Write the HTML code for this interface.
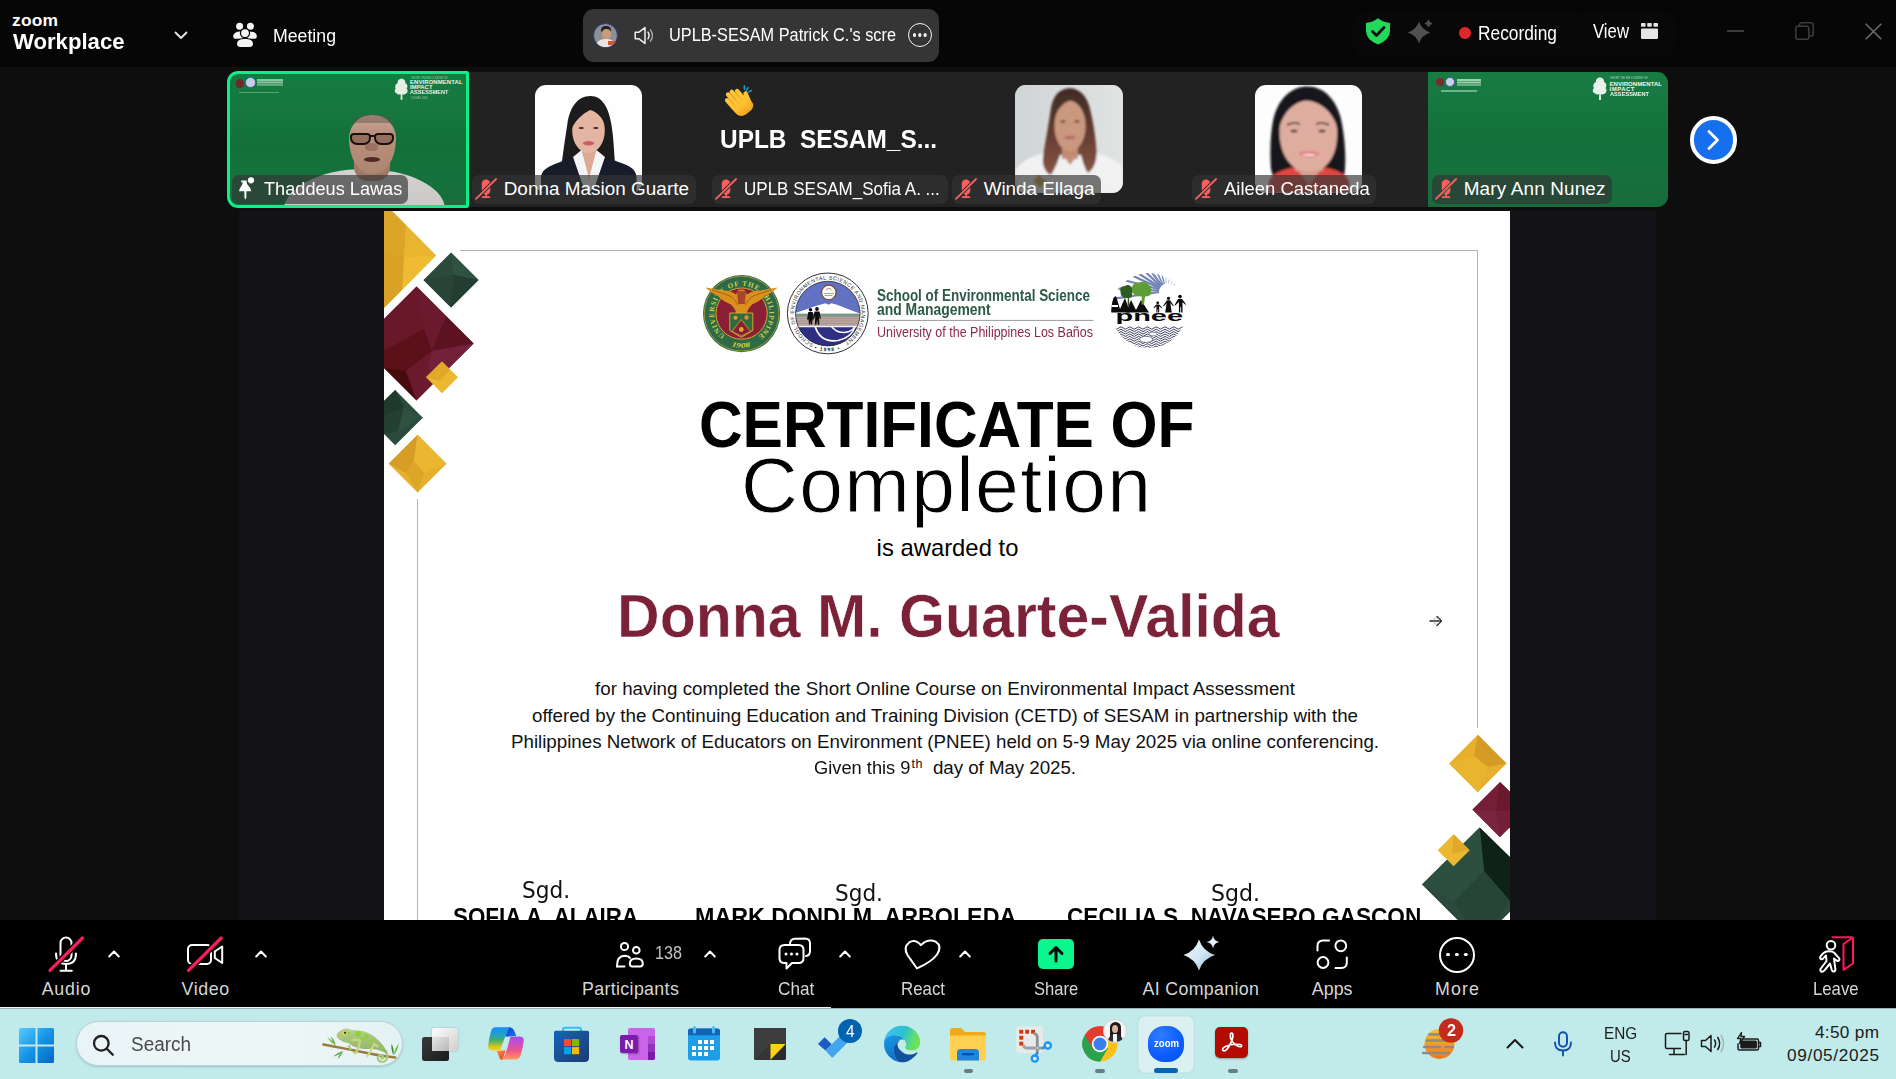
<!DOCTYPE html>
<html lang="en">
<head>
<meta charset="utf-8">
<title>Zoom Workplace - Meeting</title>
<style>
*{box-sizing:border-box;margin:0;padding:0}
html,body{width:1896px;height:1079px;overflow:hidden;background:#0e0e0e}
body{position:relative;font-family:"Liberation Sans",sans-serif;color:#fff}
.abs{position:absolute}
.t{position:absolute;white-space:pre;line-height:1;font-family:"Liberation Sans",sans-serif}
svg{position:absolute;overflow:visible}
#top{position:absolute;left:0;top:0;width:1896px;height:67px;background:#060606}
#gallery{position:absolute;left:0;top:67px;width:1896px;height:143px;background:#0e0e0e}
#stage{position:absolute;left:239px;top:211px;width:1417px;height:709px;background:#121217;overflow:hidden}
#cert{position:absolute;left:145px;top:0;width:1126px;height:760px;background:#fff;overflow:hidden;color:#000}
#toolbar{position:absolute;left:0;top:920px;width:1896px;height:88px;background:#000}
#taskbar{position:absolute;left:0;top:1007px;width:1896px;height:72px;background:#c1eaea}
</style>
</head>
<body>
<div id="top">
<span class="t" style="left:12.0px;top:11.6px;font-size:17.4px;letter-spacing:0.198px;font-weight:bold;color:#fff">zoom</span>
<span class="t" style="left:13.0px;top:30.2px;font-size:22.8px;transform:scaleX(0.9706);transform-origin:0 0;font-weight:bold;color:#fff">Workplace</span>
<svg style="left:173.500px;top:30.500px" width="14" height="9" viewBox="0 0 14 9"><path d="M1.5 1.5 L7 7 L12.5 1.5" fill="none" stroke="#e8e8e8" stroke-width="1.8" stroke-linecap="round" stroke-linejoin="round"/></svg>
<svg style="left:230px;top:20px" width="30" height="30" viewBox="230 20 30 30" fill="#f5f5f7"><circle cx="239.600" cy="26.300" r="3.500"/><circle cx="250.400" cy="26.300" r="3.500"/><path d="M233.200 36.500 C233.200 33 236.500 31.500 240.500 31.500 C241.300 31.500 242 31.600 243 31.900 L243 38 Q241 38.700 238 38.700 H235.300 Q233.200 38.700 233.200 36.500Z"/><path d="M256.800 36.500 C256.800 33 253.500 31.500 249.500 31.500 C248.700 31.500 248 31.600 247 31.900 L247 38 Q249 38.700 252 38.700 H254.700 Q256.800 38.700 256.800 36.500Z"/><circle cx="245" cy="33.100" r="5.200" fill="#060606"/><circle cx="245" cy="33.100" r="3.900"/><path d="M237 43.800 C237 40.200 240.500 38.900 245 38.900 C249.500 38.900 253 40.200 253 43.800 C253 46 251.500 47.100 249.500 47.100 H240.500 C238.500 47.100 237 46 237 43.800Z"/></svg>
<span class="t" style="left:273.0px;top:25.7px;font-size:19.2px;transform:scaleX(0.9229);transform-origin:0 0;color:#fff">Meeting</span>
<div class="abs" style="left:583px;top:9px;width:356px;height:53px;border-radius:11px;background:#353535"></div>
<div class="abs" style="left:593px;top:23px;width:25px;height:25px;border-radius:50%;background:#8d8f96;overflow:hidden;border:1px solid #2a3a7a">
  <div class="abs" style="left:7px;top:2px;width:10px;height:6px;border-radius:5px 5px 2px 2px;background:#222"></div>
  <div class="abs" style="left:7.5px;top:5px;width:9px;height:10px;border-radius:45%;background:#c99a7c"></div>
  <div class="abs" style="left:1px;top:15px;width:22px;height:10px;border-radius:9px 9px 0 0;background:#e9e4df"></div>
  <div class="abs" style="left:14px;top:17px;width:8px;height:4px;background:#d2552a"></div>
</div>
<svg style="left:634px;top:26px" width="21" height="19" viewBox="0 0 21 19" fill="none" stroke="#f0f0f0" stroke-width="1.5" stroke-linejoin="round" stroke-linecap="round"><path d="M1.200 6.200 h3.800 l6-4.600 v15.800 l-6-4.600 h-3.800z"/><path d="M14 6.200 q2.200 3.300 0 6.600"/><path d="M16.400 3.800 q4 5.700 0 11.400" stroke="#bbb" stroke-width="1.200"/></svg>
<span class="t" style="left:669.0px;top:25.8px;font-size:18.9px;transform:scaleX(0.8635);transform-origin:0 0;color:#fff">UPLB-SESAM Patrick C.'s scre</span>
<div class="abs" style="left:908px;top:23px;width:24px;height:24px;border-radius:50%;border:1.900px solid #f4f4f4"></div>
<div class="abs" style="left:913px;top:33.300px;width:3.400px;height:3.400px;border-radius:50%;background:#f4f4f4;box-shadow:5.300px 0 0 #f4f4f4,10.600px 0 0 #f4f4f4"></div>
<!-- right cluster -->
<div class="abs" style="left:1353px;top:12px;width:252px;height:43px;border-radius:10px;background:#080808"></div>
<div class="abs" style="left:1573px;top:12px;width:103px;height:43px;border-radius:10px;background:#080808"></div>
<svg style="left:1365px;top:17.500px" width="26" height="27" viewBox="0 0 26 27"><path d="M13 0.300 Q18 4.300 24.300 4.800 Q25 4.900 25 5.600 V13 Q25 21.500 13 26.500 Q1 21.500 1 13 V5.600 Q1 4.900 1.700 4.800 Q8 4.300 13 0.300Z" fill="#23d95b"/><path d="M7.500 13.500 L11.500 17.500 L19 9.500" fill="none" stroke="#0a0a0a" stroke-width="2.800" stroke-linecap="round" stroke-linejoin="round"/></svg>
<svg style="left:1408px;top:19px" width="26" height="25" viewBox="0 0 26 25" fill="#505050"><path d="M11 2.500 Q13.600 10.800 22.300 13.500 Q13.600 16.200 11 24.500 Q8.400 16.200 -0.300 13.500 Q8.400 10.800 11 2.500Z"/><path d="M20.500 0.200 Q21.500 3.500 24.500 4.500 Q21.500 5.500 20.500 8.800 Q19.500 5.500 16.500 4.500 Q19.500 3.500 20.500 0.200Z"/></svg>
<div class="abs" style="left:1459px;top:27px;width:12px;height:12px;border-radius:50%;background:#e02828"></div>
<span class="t" style="left:1477.6px;top:23.7px;font-size:19.6px;transform:scaleX(0.8834);transform-origin:0 0;color:#fff">Recording</span>
<span class="t" style="left:1593.0px;top:21.6px;font-size:19.4px;transform:scaleX(0.8636);transform-origin:0 0;color:#fff">View</span>
<svg style="left:1641px;top:23px" width="17" height="16" viewBox="0 0 17 16" fill="#e6e6e6"><rect x="0" y="0" width="4.600" height="3.800" rx="0.800"/><rect x="6.200" y="0" width="4.600" height="3.800" rx="0.800"/><rect x="12.400" y="0" width="4.600" height="3.800" rx="0.800"/><rect x="0" y="5.400" width="17" height="10.600" rx="1.200"/></svg>
<div class="abs" style="left:1727px;top:30px;width:17px;height:1.5px;background:#3d3d3d"></div>
<svg style="left:1795px;top:22px" width="19" height="18" viewBox="0 0 19 18" fill="none" stroke="#3d3d3d" stroke-width="1.500"><rect x="0.800" y="4.200" width="13" height="13" rx="2"/><path d="M4.500 4 V3 Q4.500 0.800 6.700 0.800 H16 Q18.200 0.800 18.200 3 V12 Q18.200 14 16.200 14 H14"/></svg>
<svg style="left:1865px;top:23px" width="17" height="17" viewBox="0 0 17 17" fill="none" stroke="#6e6e6e" stroke-width="1.500"><path d="M0.700 0.700 L16.300 16.300 M16.300 0.700 L0.700 16.300"/></svg>
</div>
<div id="gallery">
<!-- strip background (tiles 2-5) -->
<div class="abs" style="left:469px;top:5px;width:960px;height:135px;background:#222"></div>
<!-- tile 1: active speaker -->
<div class="abs" style="left:227px;top:3.700px;width:242.300px;height:137.500px;border-radius:11px 2px 2px 11px;background:linear-gradient(180deg,#167b41 0,#15753c 55%,#166e3c 100%);overflow:hidden">
  <div class="abs" style="left:0;top:44px;width:243px;height:60px;background:linear-gradient(180deg,rgba(16,108,54,0) 0,rgba(16,108,54,.6) 50%,rgba(16,108,54,0) 100%)"></div>
  <!-- tiny header logos -->
  <div class="abs" style="left:8.500px;top:8.500px;width:8.500px;height:8.500px;border-radius:50%;background:#6d2a2a"></div>
  <div class="abs" style="left:18px;top:6.500px;width:10.500px;height:10.500px;border-radius:50%;background:#c5cfe8;border:1.500px solid #44599c"></div>
  <div class="abs" style="left:30px;top:8.500px;width:26px;height:1.400px;background:#8fc4a2;box-shadow:0 2.400px 0 #8fc4a2,0 4.800px 0 rgba(143,196,162,.7)"></div>
  <div class="abs" style="left:12px;top:21px;width:40px;height:1.600px;background:rgba(170,215,185,.45)"></div>
  <svg style="left:166.500px;top:7px" width="15" height="23" viewBox="0 0 16 24"><path d="M8 0.500 C11 0.500 12.500 3 12 5 C14.500 6 15 9 13.500 11 C15.500 13 14.500 16.500 11.500 17 C10 17.800 9 17.500 8.800 17 L9 23 H7 L7.200 17 C6 17.800 4 17.500 3.500 16.500 C0.500 16 0 12.500 2 11 C0.500 9 1.500 6 4 5 C3.500 3 5 0.500 8 0.500Z" fill="#e4f0e6"/></svg>
  <span class="t" style="left:183.5px;top:5.9px;font-size:2.8px;transform:scaleX(0.9457);transform-origin:0 0;color:rgba(225,242,230,.6)">SHORT ONLINE COURSE ON</span>
  <span class="t" style="left:183.0px;top:9.1px;font-size:5.9px;letter-spacing:0.129px;font-weight:bold;color:#e9f3ea">ENVIRONMENTAL</span>
  <span class="t" style="left:183.0px;top:14.4px;font-size:5.9px;letter-spacing:0.069px;font-weight:bold;color:#e9f3ea">IMPACT</span>
  <span class="t" style="left:183.0px;top:19.8px;font-size:5.9px;transform:scaleX(0.9484);transform-origin:0 0;font-weight:bold;color:#e9f3ea">ASSESSMENT</span>
  <span class="t" style="left:183.5px;top:26.5px;font-size:2.8px;transform:scaleX(0.9362);transform-origin:0 0;color:rgba(225,242,230,.6)">5-9 MAY 2025</span>
  <!-- person -->
  <div class="abs" style="left:56px;top:98px;width:162px;height:70px;border-radius:50% 50% 0 0/62% 58% 0 0;background:linear-gradient(180deg,#d3d2d1,#c2c1c0)"></div>
  <div class="abs" style="left:127px;top:86px;width:36px;height:24px;border-radius:0 0 14px 14px;background:#a07a68"></div>
  <div class="abs" style="left:121.500px;top:44px;width:47px;height:59.500px;border-radius:48% 48% 46% 46%/40% 40% 60% 60%;background:linear-gradient(180deg,#c9a694 0,#b8907c 35%,#ad8571 100%)"></div>
  <div class="abs" style="left:124.500px;top:43.500px;width:41px;height:9px;border-radius:20px 20px 0 0/9px 9px 0 0;background:rgba(90,80,76,.45)"></div>
  <div class="abs" style="left:123px;top:62px;width:20.500px;height:12.500px;border-radius:4px 4px 7px 7px;border:2.600px solid #17120f;background:rgba(120,85,70,.55)"></div>
  <div class="abs" style="left:146.500px;top:62px;width:20.500px;height:12.500px;border-radius:4px 4px 7px 7px;border:2.600px solid #17120f;background:rgba(120,85,70,.55)"></div>
  <div class="abs" style="left:142px;top:64px;width:6px;height:2.400px;background:#17120f"></div>
  <div class="abs" style="left:138px;top:72px;width:13px;height:8px;border-radius:40%;background:rgba(140,95,80,.6)"></div>
  <div class="abs" style="left:137px;top:86.500px;width:16px;height:4.500px;border-radius:50%;background:#4e2a27"></div>
  <!-- active border -->
  <div class="abs" style="left:0;top:0;width:242.300px;height:137.500px;border-radius:11px 2px 2px 11px;border:3.300px solid #0cf08c"></div>
</div>
<div class="abs" style="left:232.300px;top:107.800px;width:175.700px;height:29.400px;border-radius:7px;background:rgba(51,51,51,.66)"></div>
<svg style="left:237.600px;top:109.500px" width="17" height="23.500" viewBox="0 0 17 23.500" fill="#fff"><circle cx="13" cy="3.300" r="3.100"/><path d="M3.200 3.600 H8.600 V4.800 Q8.600 7.200 10.400 8.800 Q13 11 13.200 14.200 H8.400 V20.500 L7.400 22.800 L6.400 20.500 V14.200 H1 Q1.200 11 3.300 9.200 Q4.700 7.600 4.700 5.200 H3.200Z"/></svg>
<span class="t" style="left:263.7px;top:113.1px;font-size:18.9px;transform:scaleX(0.9611);transform-origin:0 0;color:#fff">Thaddeus Lawas</span>

<!-- tile 2 -->
<svg style="left:534.7px;top:18.400px;border-radius:11px;overflow:hidden;background:#fefefe" width="107.500" height="107.500" viewBox="0 0 107.500 107.500"><defs><filter id="b2" x="-5%" y="-5%" width="110%" height="110%"><feGaussianBlur stdDeviation="0.700"/></filter></defs><g filter="url(#b2)">
<path d="M55.500 11 C42 11 35 23 32.500 38 C30 54 28 68 26.500 80 L80 80 C79 66 78.500 52 76.500 40 C74 24 68 11 55.500 11Z" fill="#1c1b1f"/>
<rect x="46" y="58" width="15" height="22" fill="#d7a18b"/>
<ellipse cx="53.500" cy="45.500" rx="16.300" ry="22.800" fill="#e4b5a0"/>
<path d="M36.500 44 C36 26 46 17.500 57 19 C66 20.500 71 29 71 42 C68 33 62 26.500 55 25 C47 29 40 36 36.500 44Z" fill="#1c1b1f"/>
<ellipse cx="46.300" cy="43" rx="2.600" ry="1.100" fill="#3a2a28"/><ellipse cx="60.800" cy="43" rx="2.600" ry="1.100" fill="#3a2a28"/>
<ellipse cx="53.500" cy="58.300" rx="5.800" ry="2.200" fill="#cf5d68"/>
<path d="M6 108 V93 C6 86 12 82 20 79 L38 72 L54 100 L70 72 L89 79 C97 82 101.500 86 101.500 93 V108Z" fill="#121a2a"/>
<path d="M38 72 L46.500 65 L54 90 L61.500 65 L70 72 L60 101 L54 108 L48 101Z" fill="#f4f5f7"/>
<path d="M47.500 68 L54 94 L60.500 68Z" fill="#dcaa94"/></g></svg>
<div class="abs" style="left:472px;top:107.800px;width:224px;height:29.400px;border-radius:7px;background:rgba(51,51,51,.66)"></div>
<svg style="left:475px;top:111px" width="22" height="22" viewBox="0 0 22 22"><rect x="6.800" y="1.600" width="8.500" height="15.100" rx="4.250" fill="#fb5f5f"/><rect x="10.300" y="16" width="1.600" height="3" fill="#fb5f5f"/><rect x="6.800" y="18.300" width="8.400" height="1.800" rx="0.500" fill="#fb5f5f"/><path d="M1 20.900 L21.100 1" stroke="#2d2d2d" stroke-width="3.800"/><path d="M1 20.900 L21.100 1" stroke="#fb5f5f" stroke-width="1.800" stroke-linecap="round"/></svg>
<span class="t" style="left:503.7px;top:113.1px;font-size:18.9px;letter-spacing:0.027px;color:#fff">Donna Masion Guarte</span>

<!-- tile 3 -->
<svg style="left:720px;top:15px" width="40" height="40" viewBox="720 82 40 40"><defs><linearGradient id="clp" gradientUnits="userSpaceOnUse" x1="0" y1="-16" x2="0" y2="14"><stop offset="0" stop-color="#fdc73a"/><stop offset=".7" stop-color="#fcc02f"/><stop offset="1" stop-color="#f4a522"/></linearGradient></defs><g transform="translate(738.300 102.600) rotate(-41) scale(0.940)"><rect x="-7.500" y="-4" width="19" height="19" rx="6.500" fill="#f0a82a"/><g fill="url(#clp)"><rect x="-9.500" y="-2" width="19" height="16" rx="6.500"/><rect x="-9.700" y="-12" width="4.700" height="16" rx="2.350"/><rect x="-4.900" y="-16" width="4.700" height="19" rx="2.350"/><rect x="-0.100" y="-15.500" width="4.700" height="19" rx="2.350"/><rect x="4.700" y="-12.500" width="4.700" height="16" rx="2.350"/><rect x="8.500" y="-5" width="4.600" height="13" rx="2.300" transform="rotate(18 10.500 2)"/></g><path d="M-5 -10 V1 M-0.200 -12 V2 M4.600 -10 V1" stroke="#e9a425" stroke-width="0.500"/></g><path d="M744.300 85 Q743 88 744.600 89.800 Q745.600 87.500 744.300 85Z M748.200 87 Q745.800 89.500 746.200 91.200 Q748.300 89.600 748.200 87Z M752 90 Q748.500 91 748 92.500 Q751 92.300 752 90Z" fill="#1aa7d8" stroke="#1aa7d8" stroke-width="0.700"/></svg>
<span class="t" style="left:719.5px;top:58.9px;font-size:26.6px;transform:scaleX(0.9178);transform-origin:0 0;font-weight:bold;color:#fff">UPLB  SESAM_S...</span>
<div class="abs" style="left:712px;top:107.800px;width:236px;height:29.400px;border-radius:7px;background:rgba(51,51,51,.66)"></div>
<svg style="left:715px;top:111px" width="22" height="22" viewBox="0 0 22 22"><rect x="6.800" y="1.600" width="8.500" height="15.100" rx="4.250" fill="#fb5f5f"/><rect x="10.300" y="16" width="1.600" height="3" fill="#fb5f5f"/><rect x="6.800" y="18.300" width="8.400" height="1.800" rx="0.500" fill="#fb5f5f"/><path d="M1 20.900 L21.100 1" stroke="#2d2d2d" stroke-width="3.800"/><path d="M1 20.900 L21.100 1" stroke="#fb5f5f" stroke-width="1.800" stroke-linecap="round"/></svg>
<span class="t" style="left:744.2px;top:113.1px;font-size:18.9px;transform:scaleX(0.9009);transform-origin:0 0;color:#fff">UPLB SESAM_Sofia A. ...</span>

<!-- tile 4 -->
<svg style="left:1015px;top:18.400px;border-radius:11px;overflow:hidden;background:#d8dbdc" width="107.500" height="107.500" viewBox="0 0 107.500 107.500"><defs><filter id="b4" x="-5%" y="-5%" width="110%" height="110%"><feGaussianBlur stdDeviation="0.800"/></filter><linearGradient id="bg4" x1="0" y1="0" x2="1" y2="0"><stop offset="0" stop-color="#d0d4d6"/><stop offset="1" stop-color="#e0e3e2"/></linearGradient><linearGradient id="hr4" x1="0" y1="0" x2="0" y2="1"><stop offset="0" stop-color="#3f2a25"/><stop offset=".6" stop-color="#6a4034"/><stop offset="1" stop-color="#8a5546"/></linearGradient></defs>
<rect width="107.500" height="107.500" fill="url(#bg4)"/><g filter="url(#b4)">
<path d="M0 108 V86 C4 78 14 72 26 69 L40 66 H72 L88 70 C98 73 104 78 107.500 82 V108Z" fill="#f1f1f2"/>
<path d="M52 3.500 C42 5 37 14 35.500 26 C33 44 30 58 28 72 C27 80 30 88 36 90 C40 84 43 76 45 70 L66 70 C68 78 70 84 73 88 C79 84 82 76 81.500 66 C80.500 50 78 36 75 24 C72 10 63 2 52 3.500Z" fill="url(#hr4)"/>
<rect x="47" y="58" width="16" height="16" fill="#bf8a72"/>
<path d="M48 70 L55 80 L63 70Z" fill="#c48f77"/>
<ellipse cx="55" cy="41" rx="15.600" ry="25.500" fill="#ca977f"/>
<path d="M38.500 36 C38 18 46 10 56 10.500 C66 11.500 71 20 71.500 34 C68 24 63 17 55 15.500 C47 18 41 26 38.500 36Z" fill="#46302a"/>
<ellipse cx="48" cy="36.500" rx="2.600" ry="1" fill="#3b2924"/><ellipse cx="62" cy="36.500" rx="2.600" ry="1" fill="#3b2924"/>
<ellipse cx="55" cy="52.500" rx="5.500" ry="1.800" fill="#b66a62"/>
<rect x="20" y="92" width="10" height="9" transform="rotate(40 25 96)" fill="#c9a23a"/></g></svg>
<div class="abs" style="left:952px;top:107.800px;width:149px;height:29.400px;border-radius:7px;background:rgba(51,51,51,.66)"></div>
<svg style="left:955px;top:111px" width="22" height="22" viewBox="0 0 22 22"><rect x="6.800" y="1.600" width="8.500" height="15.100" rx="4.250" fill="#fb5f5f"/><rect x="10.300" y="16" width="1.600" height="3" fill="#fb5f5f"/><rect x="6.800" y="18.300" width="8.400" height="1.800" rx="0.500" fill="#fb5f5f"/><path d="M1 20.900 L21.100 1" stroke="#2d2d2d" stroke-width="3.800"/><path d="M1 20.900 L21.100 1" stroke="#fb5f5f" stroke-width="1.800" stroke-linecap="round"/></svg>
<span class="t" style="left:983.7px;top:113.1px;font-size:18.9px;letter-spacing:-0.047px;color:#fff">Winda Ellaga</span>

<!-- tile 5 -->
<svg style="left:1254.7px;top:18.400px;border-radius:11px;overflow:hidden;background:#fdfdfd" width="107.500" height="107.500" viewBox="0 0 107.500 107.500"><defs><filter id="b5" x="-5%" y="-5%" width="110%" height="110%"><feGaussianBlur stdDeviation="0.800"/></filter></defs><g filter="url(#b5)">
<path d="M50 1.500 C34 3 22 16 18 36 C15 52 15 70 16 84 L20 100 L88 100 L90 84 C91 66 89 48 86 34 C81 14 68 0 50 1.500Z" fill="#19171b"/>
<path d="M14 108 V96 C18 88 28 84 40 82 H68 C80 84 90 88 94 96 V108Z" fill="#de4640"/>
<path d="M40 82 L54 100 L68 82Z" fill="#d49c8c"/>
<rect x="40" y="70" width="28" height="16" fill="#d49c8c"/>
<path d="M53 13 C38 13 26 24 24.500 44 C24 62 30 76 40 83 C48 88 60 88 68 83 C78 76 83 62 82 44 C80 24 68 13 53 13Z" fill="#dfad9f"/>
<path d="M23 48 C22 26 34 11 50 9 C52 8.500 53 9 54 9.500 C70 10 82 24 84 48 C80 32 72 20 55 16 C52 15.500 50 15.500 48 16 C34 20 26 32 23 48Z" fill="#19171b"/>
<path d="M32 40 q6 -3.500 13 -1 M61 39 q7 -2.500 13 1" stroke="#2a2020" stroke-width="1.600" fill="none"/>
<ellipse cx="39" cy="46" rx="3.600" ry="1.300" fill="#2f2424"/><ellipse cx="67" cy="46" rx="3.600" ry="1.300" fill="#2f2424"/>
<path d="M43 68.500 Q54 64 65 68.500 Q54 76 43 68.500Z" fill="#e2707a"/><path d="M46 69.500 Q54 68 62 69.500 Q54 72.500 46 69.500Z" fill="#f5e6e4"/></g></svg>
<div class="abs" style="left:1192px;top:107.800px;width:184px;height:29.400px;border-radius:7px;background:rgba(51,51,51,.66)"></div>
<svg style="left:1195px;top:111px" width="22" height="22" viewBox="0 0 22 22"><rect x="6.800" y="1.600" width="8.500" height="15.100" rx="4.250" fill="#fb5f5f"/><rect x="10.300" y="16" width="1.600" height="3" fill="#fb5f5f"/><rect x="6.800" y="18.300" width="8.400" height="1.800" rx="0.500" fill="#fb5f5f"/><path d="M1 20.900 L21.100 1" stroke="#2d2d2d" stroke-width="3.800"/><path d="M1 20.900 L21.100 1" stroke="#fb5f5f" stroke-width="1.800" stroke-linecap="round"/></svg>
<span class="t" style="left:1223.7px;top:113.1px;font-size:18.9px;transform:scaleX(0.9776);transform-origin:0 0;color:#fff">Aileen Castaneda</span>

<!-- tile 6 -->
<div class="abs" style="left:1428px;top:5px;width:240px;height:135px;border-radius:0 11px 11px 0;background:linear-gradient(180deg,#177b42 0,#16743d 55%,#176b3c 100%);overflow:hidden">
  <div class="abs" style="left:0;top:30px;width:240px;height:70px;background:linear-gradient(180deg,rgba(16,108,54,0) 0,rgba(16,108,54,.5) 50%,rgba(16,108,54,0) 100%)"></div>
  <div class="abs" style="left:8px;top:6px;width:8px;height:8px;border-radius:50%;background:#7c2a2e"></div>
  <div class="abs" style="left:17px;top:5px;width:10px;height:10px;border-radius:50%;background:#c9d2e6;border:1px solid #4e5f9b"></div>
  <div class="abs" style="left:29px;top:7px;width:24px;height:1.5px;background:#9fd0b0;box-shadow:0 2.5px 0 #9fd0b0,0 5px 0 rgba(159,208,176,.6)"></div>
  <div class="abs" style="left:13px;top:18px;width:36px;height:1.5px;background:rgba(190,225,200,.55)"></div>
  <svg style="left:164px;top:5px" width="16" height="24" viewBox="0 0 16 24"><path d="M8 0.500 C11 0.500 12.500 3 12 5 C14.500 6 15 9 13.500 11 C15.500 13 14.500 16.500 11.500 17 C10 17.800 9 17.500 8.800 17 L9 23 H7 L7.200 17 C6 17.800 4 17.500 3.500 16.500 C0.500 16 0 12.500 2 11 C0.500 9 1.500 6 4 5 C3.500 3 5 0.500 8 0.500Z" fill="#e9f3ea"/></svg>
</div>
<span class="t" style="left:1610.0px;top:10.1px;font-size:2.8px;transform:scaleX(0.9717);transform-origin:0 0;color:rgba(230,245,235,.7)">SHORT ONLINE COURSE ON</span>
<span class="t" style="left:1609.5px;top:13.5px;font-size:6px;letter-spacing:0.051px;font-weight:bold;color:#eef6ef">ENVIRONMENTAL</span>
<span class="t" style="left:1609.5px;top:18.7px;font-size:6px;letter-spacing:0.487px;font-weight:bold;color:#eef6ef">IMPACT</span>
<span class="t" style="left:1609.5px;top:23.9px;font-size:6px;transform:scaleX(0.9433);transform-origin:0 0;font-weight:bold;color:#eef6ef">ASSESSMENT</span>
<div class="abs" style="left:1432px;top:107.800px;width:180px;height:29.400px;border-radius:7px;background:rgba(51,51,51,.66)"></div>
<svg style="left:1435px;top:111px" width="22" height="22" viewBox="0 0 22 22"><rect x="6.800" y="1.600" width="8.500" height="15.100" rx="4.250" fill="#fb5f5f"/><rect x="10.300" y="16" width="1.600" height="3" fill="#fb5f5f"/><rect x="6.800" y="18.300" width="8.400" height="1.800" rx="0.500" fill="#fb5f5f"/><path d="M1 20.900 L21.100 1" stroke="#2e4a38" stroke-width="3.800"/><path d="M1 20.900 L21.100 1" stroke="#fb5f5f" stroke-width="1.800" stroke-linecap="round"/></svg>
<span class="t" style="left:1463.7px;top:113.1px;font-size:18.9px;letter-spacing:0.165px;color:#fff">Mary Ann Nunez</span>

<!-- next page button -->
<div class="abs" style="left:1689.5px;top:49px;width:47.500px;height:47.500px;border-radius:50%;background:#1670ee;border:4.600px solid #fff"></div>
<svg style="left:1706px;top:62px" width="14" height="22" viewBox="0 0 14 22"><path d="M3 2.500 L11.500 11 L3 19.500" fill="none" stroke="#fff" stroke-width="2.800" stroke-linecap="round" stroke-linejoin="round"/></svg>
</div>
<div id="stage">
<div id="cert">
<!-- border rules -->
<div class="abs" style="left:76px;top:38.500px;width:1018px;height:1.600px;background:#b4b4b4"></div>
<div class="abs" style="left:1092.500px;top:38.500px;width:1.600px;height:478px;background:#b4b4b4"></div>
<div class="abs" style="left:32.800px;top:288px;width:1.600px;height:480px;background:#b4b4b4"></div>
<!-- corner gems top-left -->
<svg style="left:0;top:0" width="110" height="290" viewBox="0 0 110 290">
  <g>
    <polygon points="0,-8 52,44.500 0,97" fill="#e4ad2b"/>
    <polygon points="0,-8 22,14 20,46 0,40" fill="#dba528"/>
    <polygon points="22,14 52,44.500 20,46" fill="#e9b530"/>
    <polygon points="20,46 52,44.500 18,79 " fill="#efbb33"/>
    <polygon points="0,40 20,46 18,79 0,97" fill="#d9a227"/>
  </g>
  <g>
    <polygon points="67,41.500 94.500,69 67,96.500 39.500,69" fill="#2b4a3b"/>
    <polygon points="67,41.500 94.500,69 70,64" fill="#2f5341"/>
    <polygon points="39.500,69 70,64 67,96.500" fill="#274436"/>
    <polygon points="70,64 94.500,69 67,96.500" fill="#223d31"/>
  </g>
  <g>
    <polygon points="32.600,75.500 89.600,132.500 32.600,189.500 0,157 0,108" fill="#6d1a2e"/>
    <polygon points="0,108 32.600,75.500 40,118 0,140" fill="#681829"/>
    <polygon points="32.600,75.500 62,105 48,140 40,118" fill="#6a1a2c"/>
    <polygon points="62,105 89.600,132.500 48,140" fill="#5c1220"/>
    <polygon points="48,140 89.600,132.500 60,162 44,158" fill="#73203a"/>
    <polygon points="0,140 40,118 48,140 22,160 0,157" fill="#5a1119"/>
    <polygon points="0,157 22,160 32.600,189.500" fill="#470a0d"/>
    <polygon points="22,160 48,140 44,158 32.600,189.500" fill="#6a1a2c"/>
  </g>
  <g>
    <polygon points="58,150.500 74,166.300 58,182.200 42,166.300" fill="#ecb832"/>
    <polygon points="58,150.500 66,158.500 56,170 42,166.300" fill="#e0a92a"/>
  </g>
  <g>
    <polygon points="11.200,179 38.800,206.700 11.200,234.300 0,223 0,190" fill="#2a4a3b"/>
    <polygon points="0,190 11.200,179 20,196 0,205" fill="#1f3a2d"/>
    <polygon points="0,205 20,196 14,220 0,223" fill="#234033"/>
    <polygon points="20,196 38.800,206.700 14,220" fill="#2f5140"/>
  </g>
  <g>
    <polygon points="33.600,223.800 62.500,252.700 33.600,281.600 4.700,252.700" fill="#e6b02c"/>
    <polygon points="4.700,252.700 33.600,223.800 30,250 22,262" fill="#d59d25"/>
    <polygon points="22,262 30,250 40,262 33.600,281.600" fill="#dca628"/>
    <polygon points="33.600,223.800 62.500,252.700 40,262 30,250" fill="#ebb730"/>
  </g>
</svg>
<!-- corner gems bottom-right -->
<svg style="left:1030px;top:515px" width="96" height="200" viewBox="1030 515 96 200">
  <g>
    <polygon points="1093.800,523.800 1122.500,552.500 1093.800,581.200 1065.100,552.500" fill="#e6b02c"/>
    <polygon points="1093.800,523.800 1122.500,552.500 1104,556 1090,545" fill="#d49c24"/>
    <polygon points="1090,545 1104,556 1093.800,581.200 1065.100,552.500" fill="#e9b42e"/>
  </g>
  <g>
    <polygon points="1116,571 1144,598.600 1116,626.200 1088.400,598.600" fill="#741f37"/>
    <polygon points="1116,571 1144,598.600 1112,600" fill="#6a1a2c"/>
    <polygon points="1088.400,598.600 1112,600 1116,626.200" fill="#7a2540"/>
  </g>
  <g>
    <polygon points="1095.700,616.400 1153.300,673.500 1095.700,731 1038,673.500" fill="#2b4a3b"/>
    <polygon points="1095.700,616.400 1126,646 1126,690 1100,660" fill="#0f2218"/>
    <polygon points="1038,673.500 1095.700,616.400 1100,660 1070,690" fill="#2d4f3f"/>
    <polygon points="1100,660 1126,690 1095.700,731 1070,690" fill="#264536"/>
  </g>
  <g>
    <polygon points="1069.600,623.200 1085.600,639.200 1069.600,655.200 1053.600,639.200" fill="#ecb832"/>
    <polygon points="1069.600,623.200 1085.600,639.200 1068,642" fill="#dfa829"/>
  </g>
</svg>

<!-- titles -->
<span class="t" style="left:314.5px;top:181.7px;font-size:64.2px;transform:scaleX(0.9410);transform-origin:0 0;font-weight:bold;color:#000">CERTIFICATE OF</span>
<span class="t" style="left:357.0px;top:234.8px;font-size:78.7px;letter-spacing:1.332px;color:#000;-webkit-text-stroke:0.900px #fff">Completion</span>
<span class="t" style="left:492.6px;top:324.5px;font-size:23.8px;letter-spacing:0.021px;color:#000">is awarded to</span>
<span class="t" style="left:232.6px;top:375.2px;font-size:60.3px;transform:scaleX(0.9792);transform-origin:0 0;font-weight:bold;color:#7b2239;-webkit-text-stroke:0.500px #fff">Donna M. Guarte-Valida</span>
<span class="t" style="left:211.0px;top:469.4px;font-size:18.75px;letter-spacing:0.009px;color:#111">for having completed the Short Online Course on Environmental Impact Assessment</span>
<span class="t" style="left:148.0px;top:495.6px;font-size:18.75px;letter-spacing:-0.001px;color:#111">offered by the Continuing Education and Training Division (CETD) of SESAM in partnership with the</span>
<span class="t" style="left:127.0px;top:522.1px;font-size:18.75px;letter-spacing:-0.012px;color:#111">Philippines Network of Educators on Environment (PNEE) held on 5-9 May 2025 via online conferencing.</span>
<span class="t" style="left:430.0px;top:548.1px;font-size:18.75px;transform:scaleX(0.9746);transform-origin:0 0;color:#111">Given this 9</span>
<span class="t" style="left:527.5px;top:546.9px;font-size:12.5px;letter-spacing:0.562px;color:#111">th</span>
<span class="t" style="left:549.0px;top:548.1px;font-size:18.75px;letter-spacing:-0.056px;color:#111">day of May 2025.</span>
<span class="t" style="left:137.6px;top:667.5px;font-size:23px;transform:scaleX(0.9408);transform-origin:0 0;color:#111;font-family:'DejaVu Sans','Liberation Sans',sans-serif">Sgd.</span>
<span class="t" style="left:451.0px;top:670.5px;font-size:23px;transform:scaleX(0.9389);transform-origin:0 0;color:#111;font-family:'DejaVu Sans','Liberation Sans',sans-serif">Sgd.</span>
<span class="t" style="left:826.6px;top:670.5px;font-size:23px;transform:scaleX(0.9604);transform-origin:0 0;color:#111;font-family:'DejaVu Sans','Liberation Sans',sans-serif">Sgd.</span>
<span class="t" style="left:68.7px;top:693.7px;font-size:24px;transform:scaleX(0.9318);transform-origin:0 0;font-weight:bold;color:#000">SOFIA A. ALAIRA</span>
<span class="t" style="left:310.7px;top:693.7px;font-size:24px;transform:scaleX(0.9704);transform-origin:0 0;font-weight:bold;color:#000">MARK DONDI M. ARBOLEDA</span>
<span class="t" style="left:683.0px;top:693.7px;font-size:24px;transform:scaleX(0.9433);transform-origin:0 0;font-weight:bold;color:#000">CECILIA S. NAVASERO GASCON</span>
<!-- cursor arrow -->
<svg style="left:1045px;top:404px" width="14" height="12" viewBox="0 0 14 12" fill="none" stroke="#222" stroke-width="1.300" stroke-linecap="round" stroke-linejoin="round"><path d="M1 6 H12.500 M8 1.500 L12.500 6 L8 10.500"/><circle cx="7.500" cy="6" r="3.200" stroke="#999" stroke-width="0.600"/></svg>
<!--LOGOS-->
<svg style="left:300px;top:50px" width="520" height="110" viewBox="684 261 520 110">
<defs>
  <path id="upArc" d="M724.970,335.640 A27.700,27.700 0 1 1 757.150,336.540"/>
  <path id="upYear" d="M731.500,346.200 A34.200,34.200 0 0 0 751.700,346.200"/>
  <path id="seArc" d="M813.700,343.900 A33.700,33.700 0 1 1 842.400,343.600"/>
  <path id="seYear" d="M814.200,348.800 A38,38 0 0 0 841.400,348.800"/>
  <clipPath id="seClip"><circle cx="827.800" cy="313.600" r="32.300"/></clipPath>
  <clipPath id="pnClip"><circle cx="1148.700" cy="310.600" r="37.500"/></clipPath>
</defs>
<!-- UP seal -->
<circle cx="741.600" cy="313.600" r="38.600" fill="#2d6a45"/>
<circle cx="741.600" cy="313.600" r="37.300" fill="none" stroke="#c9a53a" stroke-width="0.700"/>
<circle cx="741.600" cy="313.600" r="25.600" fill="#8a1f35" stroke="#d4a62e" stroke-width="1"/>
<text font-family="'Liberation Serif',serif" font-weight="bold" font-size="7.200" fill="#cfd04c"><textPath href="#upArc" textLength="143" lengthAdjust="spacing">UNIVERSITY OF THE PHILIPPINES</textPath></text>
<text font-family="'Liberation Serif',serif" font-style="italic" font-weight="bold" font-size="6.800" fill="#d3d24a"><textPath href="#upYear" textLength="19" lengthAdjust="spacingAndGlyphs">1908</textPath></text>
<!-- eagle -->
<path d="M705.500,287.500 Q716,289 722,290.500 Q730,290 736,294.500 L738,290.500 Q741.500,288.500 745,290.500 L747,294.500 Q753,290 761,290.500 Q767,289 777.700,287.500 Q771,293.500 765,296 Q760,301.500 752,304.500 Q748,308 746.500,313 H736.500 Q735,308 731,304.500 Q723,301.500 718,296 Q712,293.500 705.500,287.500Z" fill="#d9901f"/>
<path d="M712,290 Q722,293 730,296 Q735,299 738,305 M771,290 Q761,293 753,296 Q748,299 745,305" fill="none" stroke="#b45f14" stroke-width="1"/>
<path d="M737,291 h9 l-1.200,13 h-6.600Z" fill="#a8452a"/>
<!-- shield -->
<path d="M729.800,313 H752.800 V330.500 L741.300,337.300 L729.800,330.500Z" fill="#2f6b3f" stroke="#d4a62e" stroke-width="1"/>
<path d="M741.300,319.500 L750.500,331.500 L741.300,336 L732,331.500Z" fill="#8a1f35" stroke="#d4a62e" stroke-width="0.800"/>
<circle cx="735.500" cy="317.800" r="2" fill="#d9a62e"/><circle cx="746.500" cy="317.500" r="2.200" fill="#e08a3a"/>
<circle cx="741.300" cy="329.500" r="2.400" fill="#d9a62e"/>
<!-- SESAM seal -->
<circle cx="827.800" cy="313.400" r="40.400" fill="#fff" stroke="#1a1a1a" stroke-width="0.900"/>
<text font-family="'Liberation Sans',sans-serif" font-size="5.300" fill="#1f1f1f"><textPath href="#seArc" textLength="179" lengthAdjust="spacing">SCHOOL OF ENVIRONMENTAL  SCIENCE  AND MANAGEMENT</textPath></text>
<text font-family="'Liberation Sans',sans-serif" font-weight="bold" font-size="5" fill="#1f1f1f"><textPath href="#seYear" textLength="26" lengthAdjust="spacing">• 1998 •</textPath></text>
<g clip-path="url(#seClip)">
  <rect x="795" y="281" width="66" height="66" fill="#6272c2"/>
  <path d="M795,313 L806,309.500 L814,306.500 L821,304.500 L825.500,303.300 L828.500,304.800 L831.500,303.300 L837,304.800 L846,308.300 L855,311.800 L861,313.800 V316 H795Z" fill="#fff"/>
  <rect x="795" y="313.600" width="66" height="3" fill="#7c9a83"/>
  <rect x="795" y="316.600" width="66" height="9.200" fill="#bba69e"/>
  <path d="M795,318.500 H861 M795,321 H861 M795,323.500 H861" stroke="#a48f88" stroke-width="0.700"/>
  <rect x="795" y="325.800" width="66" height="1.600" fill="#f4f4f8"/>
  <rect x="795" y="327.400" width="66" height="20" fill="#2d2e84"/>
  <path d="M815,326 Q820,343 838,340.500 Q851,338 855,327" fill="none" stroke="#fff" stroke-width="1.700"/>
  <path d="M831,326 Q838,335 849,331.500 Q853,330 855.500,326" fill="none" stroke="#fff" stroke-width="1.400"/>
</g>
<circle cx="827.800" cy="313.600" r="32.300" fill="none" stroke="#1a1a1a" stroke-width="0.700"/>
<circle cx="828.800" cy="292.500" r="7.300" fill="#fbfbfb" stroke="#7a4a3a" stroke-width="1.300"/>
<path d="M823.500,293.500 h10.500 M824.500,295.500 h8" stroke="#7aa36a" stroke-width="0.800"/>
<path d="M826,290 q2.800,-3.500 5.600,0" fill="none" stroke="#9a7a5a" stroke-width="0.900"/>
<!-- couple silhouettes -->
<g fill="#0d0d0d">
  <circle cx="810.500" cy="309.800" r="1.800"/><path d="M808.300,312 h4.400 l1.300,7.500 h-1.500 l-0.300,5 h-1.300 l-0.300,-4 l-0.400,4 h-1.300 l-0.300,-5 h-1.600Z"/>
  <circle cx="817" cy="309" r="1.900"/><path d="M814.500,311.500 h5 l1.500,7 l-1.100,0.400 l-0.900,-3.500 l0.300,9.300 h-1.500 l-0.700,-5.500 l-0.700,5.500 h-1.500 l0.300,-9.300 l-1,3 l-1,-0.400Z"/>
</g>
<!-- school name -->
<path d="M877,320.400 H1093.500" stroke="#9a9a9a" stroke-width="1"/>
<!-- PNEE logo -->
<g clip-path="url(#pnClip)">
  <g stroke="#7185b6" stroke-width="2.200">
    <path d="M1166,291 L1105,300"/><path d="M1166,291 L1107,288"/><path d="M1166,291 L1112,277"/><path d="M1166,291 L1120,270"/><path d="M1166,291 L1130,268"/><path d="M1166,291 L1139,266"/><path d="M1166,291 L1147,266"/><path d="M1166,291 L1154,266" stroke-width="1.600"/><path d="M1166,291 L1160,266" stroke-width="1.300"/>
  </g>
  <g stroke="#9aa8cc" stroke-width="0.800"><path d="M1166,291 L1166,268"/><path d="M1166,291 L1172,270"/><path d="M1166,291 L1178,273"/><path d="M1166,291 L1183,278"/></g>
  <circle cx="1168" cy="292" r="9" fill="#fff"/>
  <path d="M1110,312.500 V300 L1116,296 L1120,309 L1125,298 L1130,312.500Z" fill="#0c0c0c"/>
  <path d="M1126,312.500 L1131,300 L1136,310 L1141,300 L1149,312.500Z" fill="#0c0c0c"/>
  <path d="M1111,305 h7 v2 h-7Z" fill="#fff"/>
  <path d="M1120.500,292 Q1119,286 1125,286 Q1128,284 1131,286.500 Q1134,289 1132,294 Q1133,298 1129,298 L1129.500,306 H1127.500 L1127.800,298 Q1121,299 1120.500,292Z" fill="#2f5c1f"/>
  <path d="M1132,290 Q1131,282.500 1139,282.500 Q1144,280.500 1148,284 Q1152.500,287 1151,292.500 Q1151,296.500 1145,296.500 L1144,304.500 H1141.500 L1141.800,296.500 Q1133,297 1132,290Z" fill="#5f9d38"/>
  <g fill="#0c0c0c">
    <circle cx="1157.700" cy="302.800" r="1.400"/><path d="M1156.200,304.500 h3 l3,3.200 l-0.600,0.600 l-2.400,-2 v6.200 h-1.100 v-3 h-0.600 v3 h-1.100 v-6.200 l-2.400,2 l-0.600,-0.600Z"/>
    <circle cx="1168.500" cy="298.300" r="1.600"/><path d="M1167,300.300 h3 l3.800,5.500 l-0.700,0.500 l-2.800,-3.200 l1.500,9.400 h-6.600 l1.500,-9.400 l-2.800,3.200 l-0.700,-0.500Z"/>
    <circle cx="1180" cy="296.600" r="1.800"/><path d="M1178,299 h4 l4.800,6 l-0.700,0.600 l-3.600,-3.500 v10.400 h-1.400 v-5.500 h-0.800 v5.500 h-1.400 v-10.400 l-3.600,3.500 l-0.700,-0.600Z"/>
  </g>
  <g fill="none" stroke="#1e1f48" stroke-width="0.850">
    <path d="M1110,328 q2.200,-2.400 4.400,0 t4.400,0 t4.400,0 t4.400,0 t4.400,0 t4.400,0 t4.400,0 t4.400,0 t4.400,0 t4.400,0 t4.400,0 t4.400,0 t4.400,0 t4.400,0 t4.400,0 t4.400,0 t4.400,0 t4.400,0"/>
    <path d="M1110,330.400 q2.200,-2.400 4.400,0 t4.400,0 t4.400,0 t4.400,0 t4.400,0 t4.400,0 t4.400,0 t4.400,0 t4.400,0 t4.400,0 t4.400,0 t4.400,0 t4.400,0 t4.400,0 t4.400,0 t4.400,0 t4.400,0 t4.400,0"/>
    <path d="M1110,332.800 q2.200,-2.400 4.400,0 t4.400,0 t4.400,0 t4.400,0 t4.400,0 t4.400,0 t4.400,0 t4.400,0 t4.400,0 t4.400,0 t4.400,0 t4.400,0 t4.400,0 t4.400,0 t4.400,0 t4.400,0 t4.400,0 t4.400,0"/>
    <path d="M1110,335.200 q2.200,-2.400 4.400,0 t4.400,0 t4.400,0 t4.400,0 t4.400,0 t4.400,0 t4.400,0 t4.400,0 t4.400,0 t4.400,0 t4.400,0 t4.400,0 t4.400,0 t4.400,0 t4.400,0 t4.400,0 t4.400,0 t4.400,0"/>
    <path d="M1110,337.600 q2.200,-2.400 4.400,0 t4.400,0 t4.400,0 t4.400,0 t4.400,0 t4.400,0 t4.400,0 t4.400,0 t4.400,0 t4.400,0 t4.400,0 t4.400,0 t4.400,0 t4.400,0 t4.400,0 t4.400,0 t4.400,0 t4.400,0"/>
    <path d="M1110,340 q2.200,-2.400 4.400,0 t4.400,0 t4.400,0 t4.400,0 t4.400,0 t4.400,0 t4.400,0 t4.400,0 t4.400,0 t4.400,0 t4.400,0 t4.400,0 t4.400,0 t4.400,0 t4.400,0 t4.400,0 t4.400,0 t4.400,0"/>
    <path d="M1110,342.400 q2.200,-2.400 4.400,0 t4.400,0 t4.400,0 t4.400,0 t4.400,0 t4.400,0 t4.400,0 t4.400,0 t4.400,0 t4.400,0 t4.400,0 t4.400,0 t4.400,0 t4.400,0 t4.400,0 t4.400,0 t4.400,0 t4.400,0"/>
    <path d="M1110,344.800 q2.200,-2.400 4.400,0 t4.400,0 t4.400,0 t4.400,0 t4.400,0 t4.400,0 t4.400,0 t4.400,0 t4.400,0 t4.400,0 t4.400,0 t4.400,0 t4.400,0 t4.400,0 t4.400,0 t4.400,0 t4.400,0 t4.400,0"/>
    <path d="M1110,347.200 q2.200,-2.400 4.400,0 t4.400,0 t4.400,0 t4.400,0 t4.400,0 t4.400,0 t4.400,0 t4.400,0 t4.400,0 t4.400,0 t4.400,0 t4.400,0 t4.400,0 t4.400,0 t4.400,0 t4.400,0 t4.400,0 t4.400,0"/>
  </g>
  <ellipse cx="1146" cy="339.300" rx="6.500" ry="3" fill="#fff" stroke="#25264f" stroke-width="0.500"/>
  <ellipse cx="1153" cy="334" rx="4" ry="1.800" fill="#fff" stroke="#25264f" stroke-width="0.400"/>
</g>
<text x="1115.500" y="321" font-family="'Liberation Sans',sans-serif" font-weight="bold" font-size="15" fill="#0a0a0a" textLength="67.500" lengthAdjust="spacingAndGlyphs">pnee</text>
</svg>
<span class="t" style="left:493.0px;top:75.8px;font-size:16.2px;transform:scaleX(0.8308);transform-origin:0 0;font-weight:bold;color:#2c5a45">School of Environmental Science</span>
<span class="t" style="left:493.0px;top:89.8px;font-size:16.2px;transform:scaleX(0.8598);transform-origin:0 0;font-weight:bold;color:#2c5a45">and Management</span>
<span class="t" style="left:493.0px;top:113.4px;font-size:15.2px;transform:scaleX(0.8227);transform-origin:0 0;color:#8c2a48">University of the Philippines Los Baños</span>
<!--/LOGOS-->
</div>
</div>
<div id="toolbar">
<!-- audio -->
<svg style="left:46px;top:14px" width="40" height="40" viewBox="46 934 40 40" fill="none" stroke="#fff" stroke-width="2" stroke-linecap="round" stroke-linejoin="round"><rect x="60.500" y="937.500" width="11" height="23.500" rx="5.500"/><path d="M56 953.500 Q56 964 66 964 Q76 964 76 953.500 M66 964.500 V970.500 M60.500 970.800 H71.800"/><path d="M50 970.300 L82.500 938" stroke="#000" stroke-width="6"/><path d="M50 970.300 L82.500 938" stroke="#f91d5c" stroke-width="3.200"/></svg>
<svg style="left:108px;top:30px" width="12" height="8" viewBox="0 0 12 8" fill="none" stroke="#fff" stroke-width="2" stroke-linecap="round" stroke-linejoin="round"><path d="M1.200 6.500 L6 1.500 L10.800 6.500"/></svg>
<span class="t" style="left:41.7px;top:60.7px;font-size:17.8px;letter-spacing:0.779px;color:#d6d6d6">Audio</span>
<!-- video -->
<svg style="left:184px;top:14px" width="42" height="40" viewBox="184 934 42 40" fill="none" stroke="#fff" stroke-width="2" stroke-linecap="round" stroke-linejoin="round"><rect x="188" y="945" width="23" height="19" rx="4"/><path d="M214.800 951.500 L222.200 946.500 V963 L214.800 958 Z"/><path d="M188.500 970.300 L221.300 938" stroke="#000" stroke-width="6"/><path d="M188.500 970.300 L221.300 938" stroke="#f91d5c" stroke-width="3.200"/></svg>
<svg style="left:255px;top:30px" width="12" height="8" viewBox="0 0 12 8" fill="none" stroke="#fff" stroke-width="2" stroke-linecap="round" stroke-linejoin="round"><path d="M1.200 6.500 L6 1.500 L10.800 6.500"/></svg>
<span class="t" style="left:181.6px;top:60.7px;font-size:17.8px;letter-spacing:0.611px;color:#d6d6d6">Video</span>
<!-- participants -->
<svg style="left:614px;top:20px" width="32" height="30" viewBox="614 940 32 30" fill="none" stroke="#fff" stroke-width="2" stroke-linecap="round" stroke-linejoin="round"><circle cx="624.500" cy="946.500" r="3.600"/><circle cx="636.300" cy="950.200" r="3.300"/><path d="M617 966.500 Q616.800 956 624.500 955.800 Q628.500 955.800 630 958"/><path d="M632.300 966.500 H640 Q642.800 966.500 642.800 963.800 Q642.800 958.500 636.300 958.500 Q629.800 958.500 629.800 963.800 Q629.800 966.500 632.300 966.500 Z"/><path d="M617 966.500 H624.500"/></svg>
<span class="t" style="left:655.0px;top:23.8px;font-size:18px;transform:scaleX(0.8986);transform-origin:0 0;color:#c2c2c2">138</span>
<svg style="left:704px;top:30px" width="12" height="8" viewBox="0 0 12 8" fill="none" stroke="#fff" stroke-width="2" stroke-linecap="round" stroke-linejoin="round"><path d="M1.200 6.500 L6 1.500 L10.800 6.500"/></svg>
<span class="t" style="left:582.0px;top:60.7px;font-size:17.8px;letter-spacing:0.354px;color:#d6d6d6">Participants</span>
<!-- chat -->
<svg style="left:776px;top:16px" width="38" height="36" viewBox="776 936 38 36" fill="none" stroke="#fff" stroke-width="2" stroke-linecap="round" stroke-linejoin="round"><path d="M790 943.500 Q790.500 939 795 938.800 L805 938.500 Q810 938.500 810 943.500 V951 Q810 955.500 806 956"/><path d="M784.500 945 H798.500 Q803.500 945 803.500 950 V958 Q803.500 963 798.500 963 H792 L786.500 968.500 V963 H784.500 Q779.500 963 779.500 958 V950 Q779.500 945 784.500 945 Z"/><g fill="#fff" stroke="none"><circle cx="786" cy="954" r="1.500"/><circle cx="791.500" cy="954" r="1.500"/><circle cx="797" cy="954" r="1.500"/></g></svg>
<svg style="left:839px;top:30px" width="12" height="8" viewBox="0 0 12 8" fill="none" stroke="#fff" stroke-width="2" stroke-linecap="round" stroke-linejoin="round"><path d="M1.200 6.500 L6 1.500 L10.800 6.500"/></svg>
<span class="t" style="left:777.5px;top:60.7px;font-size:17.8px;transform:scaleX(0.9664);transform-origin:0 0;color:#d6d6d6">Chat</span>
<!-- react -->
<svg style="left:903px;top:17px" width="40" height="34" viewBox="903 937 40 34" fill="none" stroke="#fff" stroke-width="2" stroke-linecap="round" stroke-linejoin="round"><path d="M916 968 L907.500 954 Q903.500 946 910 941.500 Q916.500 938 921.500 945 Q929 938.500 936.500 942.500 Q943 947.500 937 955.500 Q931 962.500 916 968 Z" transform="rotate(-4 923 954)"/></svg>
<svg style="left:959px;top:30px" width="12" height="8" viewBox="0 0 12 8" fill="none" stroke="#fff" stroke-width="2" stroke-linecap="round" stroke-linejoin="round"><path d="M1.200 6.500 L6 1.500 L10.800 6.500"/></svg>
<span class="t" style="left:900.5px;top:60.7px;font-size:17.8px;transform:scaleX(0.9472);transform-origin:0 0;color:#d6d6d6">React</span>
<!-- share -->
<div class="abs" style="left:1038px;top:19px;width:36px;height:30px;border-radius:5px;background:#0bf78d"></div>
<svg style="left:1047px;top:25px" width="18" height="18" viewBox="0 0 18 18" fill="none" stroke="#050505" stroke-width="3" stroke-linecap="round" stroke-linejoin="round"><path d="M9 16 V3.500 M3 8.500 L9 2.500 L15 8.500"/></svg>
<span class="t" style="left:1033.8px;top:60.7px;font-size:17.8px;transform:scaleX(0.9314);transform-origin:0 0;color:#d6d6d6">Share</span>
<!-- AI companion -->
<svg style="left:1183px;top:15px" width="37" height="36" viewBox="0 0 37 36"><defs><linearGradient id="aig" x1="0" y1="0" x2="1" y2="1"><stop offset="0" stop-color="#f4fbff"/><stop offset=".55" stop-color="#cfe6f2"/><stop offset="1" stop-color="#8fb6c9"/></linearGradient></defs><path d="M16 4.500 Q19.800 16.200 32 20 Q19.800 23.800 16 35.500 Q12.200 23.800 0.500 20 Q12.200 16.200 16 4.500Z" fill="url(#aig)"/><path d="M30 0.500 Q30.800 6.200 36.500 7 Q30.800 7.800 30 13.500 Q29.200 7.800 23.500 7 Q29.200 6.200 30 0.500Z" fill="#dff0f8"/></svg>
<span class="t" style="left:1142.5px;top:60.7px;font-size:17.8px;letter-spacing:0.347px;color:#d6d6d6">AI Companion</span>
<!-- apps -->
<svg style="left:1314px;top:17px" width="36" height="34" viewBox="1314 937 36 34" fill="none" stroke="#fff" stroke-width="2" stroke-linecap="round" stroke-linejoin="round"><circle cx="1340.800" cy="945.800" r="5.400"/><circle cx="1323" cy="962.500" r="5.400"/><path d="M1317.500 950.500 V946 Q1317.500 940.500 1323 940.500 H1329"/><path d="M1346.800 957.500 V962.500 Q1346.800 968 1341.300 968 H1335.500"/></svg>
<span class="t" style="left:1311.8px;top:60.7px;font-size:17.8px;letter-spacing:0.056px;color:#d6d6d6">Apps</span>
<!-- more -->
<div class="abs" style="left:1439px;top:16.500px;width:36px;height:36px;border-radius:50%;border:2px solid #fff"></div>
<div class="abs" style="left:1446.300px;top:32.700px;width:3.600px;height:3.600px;border-radius:50%;background:#fff;box-shadow:8.900px 0 0 #fff,17.800px 0 0 #fff"></div>
<span class="t" style="left:1435.0px;top:60.7px;font-size:17.8px;letter-spacing:1.095px;color:#d6d6d6">More</span>
<!-- leave -->
<svg style="left:1816px;top:14px" width="42" height="40" viewBox="1816 934 42 40" fill="none" stroke-linecap="round" stroke-linejoin="round"><path d="M1832.500 937.200 H1852 Q1853 937.200 1853 938.200 V963.500 L1843.500 969.800 V944 L1852.500 937.800" stroke="#ff1660" stroke-width="2"/><g stroke="#fff" stroke-width="2"><circle cx="1831" cy="945.200" r="4.300"/><path d="M1826.500 951.500 Q1823 952.500 1820.500 956.500 Q1819.500 958.800 1821.300 959.300 Q1822.800 959.500 1824.500 957 L1826 955.500 L1826.500 961 L1820.500 969 Q1820 971.500 1822 971.800 Q1823.500 971.800 1824.500 970.300 L1830 963.500 L1831.800 970 Q1832.500 972 1834 971.500 Q1835.800 971 1835.300 968.800 L1834 958.500 L1836.500 960.500 Q1838.500 961.500 1839.300 960 Q1840 958.500 1838.300 957.300 L1834 952.500 Q1831 950.500 1826.500 951.500Z"/></g></svg>
<span class="t" style="left:1813.0px;top:60.7px;font-size:17.8px;transform:scaleX(0.9411);transform-origin:0 0;color:#d6d6d6">Leave</span>
</div>
<div id="taskbar">
<div class="abs" style="left:0;top:0;width:1896px;height:0.800px;background:#000"></div>
<div class="abs" style="left:0;top:-0.300px;width:831px;height:1.100px;background:#f4f6f6"></div>
<div class="abs" style="left:0;top:0.800px;width:1896px;height:1.400px;background:#9db3b3"></div>
<!-- start -->
<svg style="left:19px;top:20.500px" width="35" height="35" viewBox="0 0 35 35"><defs><linearGradient id="wg" x1="0" y1="0" x2="1" y2="1"><stop offset="0" stop-color="#56cbff"/><stop offset=".5" stop-color="#1795e6"/><stop offset="1" stop-color="#0467c4"/></linearGradient></defs><path d="M1.500 0 H16.500 V16.500 H0 V1.500 Q0 0 1.500 0Z M18.500 0 H33.500 Q35 0 35 1.500 V16.500 H18.500Z M0 18.500 H16.500 V35 H1.500 Q0 35 0 33.500Z M18.500 18.500 H35 V33.500 Q35 35 33.500 35 H18.500Z" fill="url(#wg)"/></svg>
<!-- search -->
<div class="abs" style="left:75.500px;top:14px;width:327px;height:45px;border-radius:22.500px;background:linear-gradient(90deg,#e9f4f6,#eef7f8 60%,#e4f1f3);border:1px solid #b5d3d8;box-shadow:0 1px 2px rgba(90,130,140,.35)"></div>
<svg style="left:92px;top:26.500px" width="23" height="23" viewBox="0 0 23 23" fill="none" stroke="#1f1f1f" stroke-width="2.300" stroke-linecap="round"><circle cx="9.300" cy="9.300" r="7.300"/><path d="M14.800 14.800 L20.800 20.800"/></svg>
<span class="t" style="left:130.5px;top:27.1px;font-size:20px;transform:scaleX(0.9467);transform-origin:0 0;color:#4a4a4a">Search</span>
<!-- chameleon -->
<svg style="left:322px;top:19px" width="80" height="38" viewBox="322 1026 80 38">
  <defs><linearGradient id="chB" x1="0" y1="0" x2="0" y2="1"><stop offset="0" stop-color="#b5d184"/><stop offset="1" stop-color="#8faf6b"/></linearGradient></defs>
  <path d="M323.400 1044.500 Q345 1048.500 362 1052 Q380 1056 395.300 1057.500" fill="none" stroke="#9a7b3e" stroke-width="2.500" stroke-linecap="round"/>
  <path d="M335.600 1045.600 Q330 1042 327 1037 Q332.500 1040 335.600 1045.600Z M335.600 1045.600 Q331.500 1040.500 330.800 1036.400 Q335.500 1040.500 335.600 1045.600Z" fill="#74b549"/>
  <path d="M342.700 1050.900 Q337 1052.500 333.200 1056.500 Q339.500 1055 342.700 1050.900Z M342.700 1050.900 Q338.800 1054.500 337.500 1058.900 Q342 1055.500 342.700 1050.900Z" fill="#5da647"/>
  <path d="M393.500 1055.600 Q390.500 1049 391.600 1043.700 Q394.500 1049 393.500 1055.600Z" fill="#3d8c3a"/><path d="M393.500 1055.600 Q394.800 1048.500 398.700 1043.300 Q398 1050 393.500 1055.600Z" fill="#6bb343"/>
  <path d="M386.200 1051.500 Q389 1058.500 385 1061.200 Q380.500 1063 378.200 1059.800 Q376.800 1056.500 380 1055.300 Q383 1054.800 383.200 1057.500 Q382.500 1059 381.200 1058.200" fill="none" stroke="#a9c97c" stroke-width="2.200" stroke-linecap="round"/>
  <path d="M336.500 1035.700 Q337.500 1031.500 342.500 1029.500 Q347 1027.800 351.900 1030.200 Q356 1030 360.700 1030.700 Q372 1032.500 379.700 1041.400 Q385.500 1047.500 387.500 1054 Q384 1051.500 380 1050.500 Q375 1049 370.200 1048.800 Q365 1049.500 360.700 1048.600 Q353 1047 348.400 1042.900 Q343.500 1042.800 340.500 1040.200 Q337 1038.500 336.500 1035.700Z" fill="url(#chB)"/>
  <path d="M343.500 1029.300 Q347.500 1027.500 351.900 1030.200 Q352.300 1033 350 1034.500 Q348 1030.500 343.500 1029.300Z" fill="#bcd48a"/>
  <path d="M337 1036.800 Q340 1038.200 343.500 1037.800" fill="none" stroke="#c9c69a" stroke-width="0.700"/>
  <g fill="#8fd03f"><circle cx="358.300" cy="1033.800" r="2.800"/><circle cx="366.400" cy="1036.600" r="2.300"/><circle cx="362.100" cy="1039" r="1.800"/><circle cx="372.600" cy="1040.400" r="1.600"/><circle cx="368.300" cy="1041.900" r="1.300"/><circle cx="377.800" cy="1042.900" r="1.200"/><circle cx="382.100" cy="1048" r="1.300"/><circle cx="349.500" cy="1033" r="1.300"/></g>
  <path d="M352.500 1040 Q357 1039.300 360 1040.600 Q359.500 1046 356.500 1052.300 L354 1052.800" fill="none" stroke="#c3d67d" stroke-width="2.300" stroke-linecap="round" stroke-linejoin="round"/>
  <path d="M349 1046 L350.500 1049.500" fill="none" stroke="#a6c47a" stroke-width="2" stroke-linecap="round"/>
  <path d="M377.500 1046.500 L374.300 1044 Q371.500 1049 369.500 1053 L367.300 1056" fill="none" stroke="#cbda82" stroke-width="2.200" stroke-linecap="round" stroke-linejoin="round"/>
  <circle cx="344.100" cy="1033.300" r="2.300" fill="#d9d84e"/><circle cx="345" cy="1032.800" r="1.100" fill="#581a1c"/>
</svg>
<!-- task view -->
<div class="abs" style="left:432px;top:20.500px;width:26px;height:23px;border-radius:2px;background:linear-gradient(135deg,#fdfdfd,#cfcfcf);box-shadow:0 0 2px rgba(0,0,0,.25)"></div>
<div class="abs" style="left:422px;top:29.500px;width:27px;height:24px;border-radius:2.500px;background:linear-gradient(135deg,#3a3a3a,#1b1b1b)"></div>
<div class="abs" style="left:432px;top:29.500px;width:17px;height:14px;background:linear-gradient(135deg,#e4e4e4,#b8b8b8)"></div>
<!-- copilot -->
<svg style="left:488px;top:20px" width="36" height="34" viewBox="0 0 36 34"><defs><linearGradient id="cpA" x1="0" y1="0" x2="0" y2="1"><stop offset="0" stop-color="#1b8eef"/><stop offset=".25" stop-color="#1f9be0"/><stop offset=".55" stop-color="#43ad6a"/><stop offset=".85" stop-color="#d9c81f"/><stop offset="1" stop-color="#f6d21a"/></linearGradient><linearGradient id="cpB" x1="0" y1="0" x2="0" y2="1"><stop offset="0" stop-color="#a94bf0"/><stop offset=".3" stop-color="#c84fc8"/><stop offset=".6" stop-color="#f0528a"/><stop offset="1" stop-color="#ff9c5e"/></linearGradient><linearGradient id="cpC" x1="0" y1="0" x2="1" y2="1"><stop offset="0" stop-color="#0c3fd2"/><stop offset="1" stop-color="#1f74ea"/></linearGradient><linearGradient id="cpD" x1="0" y1="0" x2="1" y2="1"><stop offset="0" stop-color="#ff8f3a"/><stop offset="1" stop-color="#e9382a"/></linearGradient></defs>
<path d="M20 0.200 Q23.600 -0.200 25.200 2 Q27 5 28.300 9 L17.300 9.800Z" fill="url(#cpC)"/>
<path d="M8.800 24 L17.500 23.600 L14.600 32.700 Q12.500 33 11.600 31.200Z" fill="url(#cpD)"/>
<path d="M7.500 0.300 H21.700 Q19.500 4 17.300 9.500 Q15.500 14 14.200 17.700 Q13.200 20.500 12.300 23.400 H4.500 Q-0.300 23.400 0.200 18.500 Q0.700 13 3 4.200 Q4 0.300 7.500 0.300Z" fill="url(#cpA)"/>
<path d="M22.400 9.800 L31.500 9.500 Q36.300 9.500 35.700 14.300 Q35 20.500 32.700 28 Q31.500 32.400 28 32.500 L14.200 32.600 Q16 30.500 17.300 27.200 Q18.700 23.500 19.800 19.600 Q21 15 22.400 9.800Z" fill="url(#cpB)"/></svg>
<!-- store -->
<svg style="left:553px;top:19px" width="37" height="37" viewBox="0 0 37 37"><defs><linearGradient id="sg" x1="0" y1="0" x2="1" y2="1"><stop offset="0" stop-color="#1366b8"/><stop offset="1" stop-color="#1e3a72"/></linearGradient></defs><path d="M10 8 V3.500 Q10 1.700 11.800 1.700 H26.200 Q28 1.700 28 3.500 V8" fill="none" stroke="#2fc0ff" stroke-width="2"/><path d="M1 6.300 Q1 4.800 2.500 4.800 H34.500 Q36 4.800 36 6.300 V31.500 Q36 36 31.500 36 H5.500 Q1 36 1 31.500Z" fill="url(#sg)"/><rect x="10.900" y="13" width="7.100" height="7.100" fill="#f25022"/><rect x="19" y="13" width="7.100" height="7.100" fill="#7fba00"/><rect x="10.900" y="21.100" width="7.100" height="7.100" fill="#00a4ef"/><rect x="19" y="21.100" width="7.100" height="7.100" fill="#ffb900"/></svg>
<!-- onenote -->
<div class="abs" style="left:628px;top:21px;width:27px;height:32px;border-radius:2px;background:#ca64ea"></div>
<div class="abs" style="left:648px;top:29px;width:7px;height:8px;background:#ae4bd5"></div>
<div class="abs" style="left:648px;top:37px;width:7px;height:8px;background:#9332bf"></div>
<div class="abs" style="left:648px;top:45px;width:7px;height:8px;border-radius:0 0 2px 0;background:#7719aa"></div>
<div class="abs" style="left:620px;top:28px;width:18px;height:18px;border-radius:2px;background:#7a1aae;box-shadow:1px 1px 2px rgba(0,0,0,.3)"></div>
<span class="t" style="left:624.5px;top:31.7px;font-size:12.5px;letter-spacing:-0.031px;font-weight:bold;color:#fff">N</span>
<!-- calendar -->
<svg style="left:687px;top:18.500px" width="34" height="35" viewBox="0 0 34 35"><rect x="1" y="2.500" width="32" height="32" rx="3" fill="#1e9de8"/><path d="M1 9.300 V5.500 Q1 2.500 4 2.500 H30 Q33 2.500 33 5.500 V9.300Z" fill="#1462b5"/><rect x="6" y="0" width="3" height="7.500" rx="1.500" fill="#48c2f5"/><rect x="25" y="0" width="3" height="7.500" rx="1.500" fill="#48c2f5"/><g fill="#fff"><rect x="11" y="14" width="4" height="4"/><rect x="17" y="14" width="4" height="4"/><rect x="23" y="14" width="4" height="4"/><rect x="5" y="20" width="4" height="4"/><rect x="11" y="20" width="4" height="4"/><rect x="17" y="20" width="4" height="4"/><rect x="23" y="20" width="4" height="4"/><rect x="5" y="26" width="4" height="4"/><rect x="11" y="26" width="4" height="4"/><rect x="17" y="26" width="4" height="4"/></g></svg>
<!-- sticky notes -->
<svg style="left:753.500px;top:21px" width="32" height="32" viewBox="0 0 33 32" preserveAspectRatio="none"><rect width="33" height="32" rx="2" fill="#353535"/><path d="M0 0 H33 V16 H17 L0 32Z" fill="#3d3d3d"/><path d="M17 16 H33 L17 32Z" fill="#fcd116"/><path d="M33 16 V30 Q33 32 31 32 H17Z" fill="#2b2b2b"/></svg>
<!-- to do -->
<svg style="left:817px;top:11px" width="46" height="46" viewBox="817 1018 46 46"><path d="M817.900 1043.900 L824.600 1037.200 L831.800 1044.200 L825.500 1050.500Z" fill="#1f5ac4"/><path d="M825.500 1050.500 L831.800 1044.200 L846 1030 L853 1037 L833 1057.300 Q832.300 1058 831.500 1057.200Z" fill="#42a5ee"/><circle cx="850" cy="1030.900" r="12" fill="#0063b1"/></svg>
<span class="t" style="left:846.0px;top:15.9px;font-size:16.2px;transform:scaleX(0.9539);transform-origin:0 0;color:#fff">4</span>
<!-- edge -->
<svg style="left:884px;top:19px" width="37" height="37" viewBox="0 0 37 37"><defs><linearGradient id="egA" x1="0" y1="0.300" x2="1" y2="0.600"><stop offset="0" stop-color="#41bff8"/><stop offset=".5" stop-color="#2cc2d0"/><stop offset=".8" stop-color="#5fdc78"/><stop offset="1" stop-color="#6fe44c"/></linearGradient><linearGradient id="egB" x1="0" y1="0" x2="0.300" y2="1"><stop offset="0" stop-color="#1c9be2"/><stop offset="1" stop-color="#0a6fd0"/></linearGradient></defs>
<path d="M0.300 14.800 C0.900 13.300 2 12 3.300 11.100 C5 10 7 9.200 9.500 9.050 C11.500 9 13.500 9.200 15.600 9.900 C17.500 10.500 19 11.500 20.500 13.900 C19.500 13.500 18.500 13.400 17.800 13.500 C16.800 13.500 16 13.600 15.600 13.900 C13.500 15 12.500 16.500 12.300 17.200 C10.500 19 9.800 21 9.900 22.500 C9.800 25 9.900 27 10.300 28.600 C11 31.500 12.200 33.800 13.900 35.200 L18 36.200 A18.200 18.200 0 0 1 0.300 14.800Z" fill="url(#egB)"/>
<path d="M15.600 13.900 C13.500 15 12.500 16.500 12.300 17.200 C10.500 19 9.800 21 9.900 22.500 C9.800 25 9.900 27 10.300 28.600 C11 31.500 12.200 33.800 13.900 35.200 C16 36.500 21 36.600 24.500 34.900 C28.500 33 31.500 30 33.600 27 L32.700 26.200 C31.500 27.300 30 28 28.600 28.200 C26.500 28.600 24.500 28.600 22.500 28.200 C20.500 27.800 18.500 26.500 17.200 25 C15.500 23.500 14.300 22 13.900 20.500 C13.600 19.700 13.500 18.800 13.500 18 C13.600 16.800 14.200 15.800 15.200 15.200Z" fill="#11529e"/>
<path d="M0.300 14.800 C1.500 6 9 -0.200 18 -0.200 C28 -0.200 36.400 7.500 36.200 16.400 C36 21.500 32.500 24.300 28.600 24.200 C25 24.300 22 23.800 21.100 21.700 C22.300 20.500 22.500 19.200 22.100 18 C21.800 16.200 21.300 14.800 20.500 13.900 C19 11.500 17.500 10.500 15.600 9.900 C13.500 9.200 11.500 9 9.500 9.050 C7 9.200 5 10 3.300 11.100 C2 12 0.900 13.300 0.300 14.800Z" fill="url(#egA)"/></svg>
<!-- explorer -->
<svg style="left:950px;top:20px" width="36" height="34" viewBox="0 0 36 34"><path d="M0 4 Q0 1 3 1 H11 L15 5 H33 Q36 5 36 8 V12 H0Z" fill="#f0a919"/><path d="M0 8.500 H36 V30 Q36 33.500 32.500 33.500 H3.500 Q0 33.500 0 30Z" fill="#ffd04f"/><path d="M7 33.500 V25.500 Q7 22 10.500 22 H25.500 Q29 22 29 25.500 V33.500Z" fill="#1f86dc"/><rect x="12" y="26" width="12" height="2.300" rx="1.100" fill="#0b4f9a"/></svg>
<div class="abs" style="left:963.500px;top:1068.500px;margin-top:-1007px;width:9.500px;height:4.500px;border-radius:2.300px;background:#6a7d80"></div>
<!-- snipping -->
<svg style="left:1016px;top:18.500px" width="37" height="37" viewBox="0 0 37 37"><rect x="0.200" y="0.500" width="26.800" height="26.600" rx="3" fill="#e8eaea"/><g fill="#d6360f"><rect x="3.300" y="3.800" width="3.900" height="3.900"/><rect x="9.200" y="3.800" width="3.900" height="3.900"/><rect x="15.100" y="3.800" width="3.900" height="3.900"/><rect x="3.300" y="9.800" width="3.900" height="3.900"/><rect x="3.300" y="15.700" width="3.900" height="3.900"/></g><path d="M18.500 7.600 Q21.300 8.200 21.300 11.500 V27" fill="none" stroke="#8b9094" stroke-width="2.800" stroke-linecap="round"/><path d="M7.800 20 Q8.200 22 11 22 H27" fill="none" stroke="#9aa0a4" stroke-width="2.800" stroke-linecap="round"/><circle cx="21.300" cy="22" r="0.900" fill="#d5d8da"/><path d="M27 22 L29 20.800 M21 27 L20 29.500" stroke="#1e94ea" stroke-width="2.600" stroke-linecap="round"/><circle cx="31.800" cy="19.600" r="3.100" fill="#dff1f8" stroke="#1e94ea" stroke-width="2.300"/><circle cx="18.800" cy="32.600" r="3.100" fill="#dff1f8" stroke="#1e94ea" stroke-width="2.300"/></svg>
<!-- chrome -->
<svg style="left:1082px;top:19px" width="36" height="36" viewBox="0 0 36 36"><circle cx="18" cy="18" r="17.500" fill="#fbc116"/><path d="M18 18 L2.800 9.200 A17.500 17.500 0 0 1 33.200 9.200 Z" fill="#e33b2e"/><path d="M18 18 L2.800 9.200 A17.500 17.500 0 0 0 18 35.500 L26 22Z" fill="#2ba24c"/><path d="M18 9.500 H33.300 A17.500 17.500 0 0 0 2.800 9.200 L10.600 22.500Z" fill="#e33b2e"/><path d="M10.600 22.300 L2.800 9.200 A17.500 17.500 0 0 0 18 35.500 L25.400 22.300Z" fill="#2ba24c"/><circle cx="18" cy="18" r="8.200" fill="#fff"/><circle cx="18" cy="18" r="6.500" fill="#3a7ff0"/></svg>
<div class="abs" style="left:1102.500px;top:11.500px;width:24px;height:24px;border-radius:50%;background:#f4f4f4;border:1px solid #cfd8da;overflow:hidden"><div class="abs" style="left:6px;top:2px;width:11px;height:17px;border-radius:6px 6px 3px 3px;background:#1d1a1c"></div><div class="abs" style="left:8.500px;top:5px;width:6px;height:8px;border-radius:50%;background:#e2b49d"></div><div class="abs" style="left:4px;top:15px;width:15px;height:9px;border-radius:6px 6px 0 0;background:#2b2b33"></div><div class="abs" style="left:9.500px;top:14px;width:4px;height:8px;background:#f4f4f4"></div></div>
<div class="abs" style="left:1095px;top:61.500px;width:9.500px;height:4.500px;border-radius:2.300px;background:#6a7d80"></div>
<!-- zoom active -->
<div class="abs" style="left:1138px;top:8.500px;width:56px;height:57px;border-radius:6px;background:#daf0f1;border:1px solid #cfe9ea;box-shadow:0 0 1px rgba(80,120,130,.4)"></div>
<div class="abs" style="left:1148px;top:19px;width:36px;height:36px;border-radius:16px;background:radial-gradient(circle at 35% 25%,#2f7bff,#0b5cff 60%,#0a4fe0)"></div>
<span class="t" style="left:1153.5px;top:30.9px;font-size:10.5px;transform:scaleX(0.9117);transform-origin:0 0;font-weight:bold;color:#fff">zoom</span>
<div class="abs" style="left:1153.500px;top:61px;width:24.500px;height:5px;border-radius:2.500px;background:#0a64b4"></div>
<!-- acrobat -->
<div class="abs" style="left:1215px;top:19.500px;width:33px;height:31.500px;border-radius:5px;background:#b30b00;box-shadow:0 1px 2px rgba(0,0,0,.3)"></div>
<svg style="left:1221px;top:24px" width="22" height="22" viewBox="0 0 22 22" fill="none" stroke="#fff" stroke-width="1.700" stroke-linecap="round" stroke-linejoin="round"><path d="M2 19.500 Q0.500 17.500 4.500 15.500 Q11 12.500 19 13.500 Q21.500 14.200 20.200 15.600 Q17 16.500 12.500 12 Q8.500 7.500 9.500 3 Q10.500 1 11.800 3 Q12.500 8 8 15.500 Q4.500 21 2 19.500Z"/></svg>
<div class="abs" style="left:1228px;top:61.500px;width:9.500px;height:4.500px;border-radius:2.300px;background:#6a7d80"></div>
<!-- weather -->
<svg style="left:1420px;top:10px" width="46" height="46" viewBox="1420 1017 46 46"><defs><linearGradient id="sun" x1="0" y1="0" x2="0" y2="1"><stop offset="0" stop-color="#f8c12c"/><stop offset="1" stop-color="#f07a1c"/></linearGradient></defs><circle cx="1439.500" cy="1044" r="15" fill="url(#sun)"/><g stroke="#8f8a86" stroke-width="2.300" stroke-linecap="round"><path d="M1429 1034.500 H1446"/><path d="M1427 1040.500 H1456"/><path d="M1424 1047 H1440 M1445 1047 H1453"/><path d="M1423 1053 H1449"/></g><circle cx="1451" cy="1030.500" r="12.200" fill="#c42b1c"/></svg>
<span class="t" style="left:1446.5px;top:15.4px;font-size:17px;transform:scaleX(0.9505);transform-origin:0 0;font-weight:bold;color:#fff">2</span>
<!-- tray -->
<svg style="left:1506px;top:31px" width="18" height="11" viewBox="0 0 18 11" fill="none" stroke="#1b1b1b" stroke-width="2" stroke-linecap="round" stroke-linejoin="round"><path d="M1.500 9.500 L9 2 L16.500 9.500"/></svg>
<svg style="left:1553px;top:24px" width="20" height="26" viewBox="0 0 20 26" fill="none" stroke="#0f4fb0" stroke-width="1.900" stroke-linecap="round"><rect x="6" y="1.200" width="8" height="14.500" rx="4"/><path d="M2 11.500 Q2 19.500 10 19.500 Q18 19.500 18 11.500 M10 19.500 V24.500"/></svg>
<span class="t" style="left:1603.6px;top:18.2px;font-size:17.2px;transform:scaleX(0.8913);transform-origin:0 0;color:#1b1b1b">ENG</span>
<span class="t" style="left:1610.0px;top:41.2px;font-size:17.2px;transform:scaleX(0.8706);transform-origin:0 0;color:#1b1b1b">US</span>
<svg style="left:1664px;top:23px" width="27" height="27" viewBox="0 0 27 27" fill="none" stroke="#1b1b1b" stroke-width="1.500" stroke-linecap="round" stroke-linejoin="round"><path d="M17 3.500 H3 Q1.500 3.500 1.500 5 V17 Q1.500 18.500 3 18.500 H16.500"/><path d="M10 18.500 V24 M5.500 24.500 H20.500"/><rect x="19.500" y="1.500" width="5.500" height="9" rx="1.500"/><path d="M22.200 10.500 V24.500"/><path d="M21 4.500 h2.500"/></svg>
<svg style="left:1700px;top:27px" width="26" height="19" viewBox="0 0 26 19" fill="none" stroke="#1b1b1b" stroke-width="1.500" stroke-linecap="round" stroke-linejoin="round"><path d="M1.500 6.500 H5.500 L11 1.500 V17.500 L5.500 12.500 H1.500Z"/><path d="M14.500 6 Q16.800 9.500 14.500 13"/><path d="M17.800 3.500 Q21.500 9.500 17.800 15.500"/><path d="M21.200 1.500 Q26 9.500 21.200 17.500" stroke="#9fb5b8"/></svg>
<svg style="left:1736px;top:24px" width="27" height="22" viewBox="0 0 27 22" fill="none" stroke="#1b1b1b" stroke-width="1.500" stroke-linecap="round" stroke-linejoin="round"><path d="M6.500 8 H21 Q22.500 8 22.500 9.500 V17.500 Q22.500 19 21 19 H3.500 Q2 19 2 17.500 V13"/><path d="M22.800 11.500 H24.500 V15.500 H22.800"/><rect x="5" y="10.200" width="15.200" height="6.600" rx="0.800" fill="#1b1b1b"/><path d="M5.500 1.500 L1.500 7.500 H5 L3.500 12.500 L8.500 5.500 H5Z" fill="#c1eaea" stroke-width="1.300"/></svg>
<span class="t" style="left:1815.0px;top:16.9px;font-size:17.2px;letter-spacing:0.315px;color:#1b1b1b">4:50 pm</span>
<span class="t" style="left:1787.0px;top:40.4px;font-size:17.2px;letter-spacing:0.663px;color:#1b1b1b">09/05/2025</span>
</div>
</body>
</html>
